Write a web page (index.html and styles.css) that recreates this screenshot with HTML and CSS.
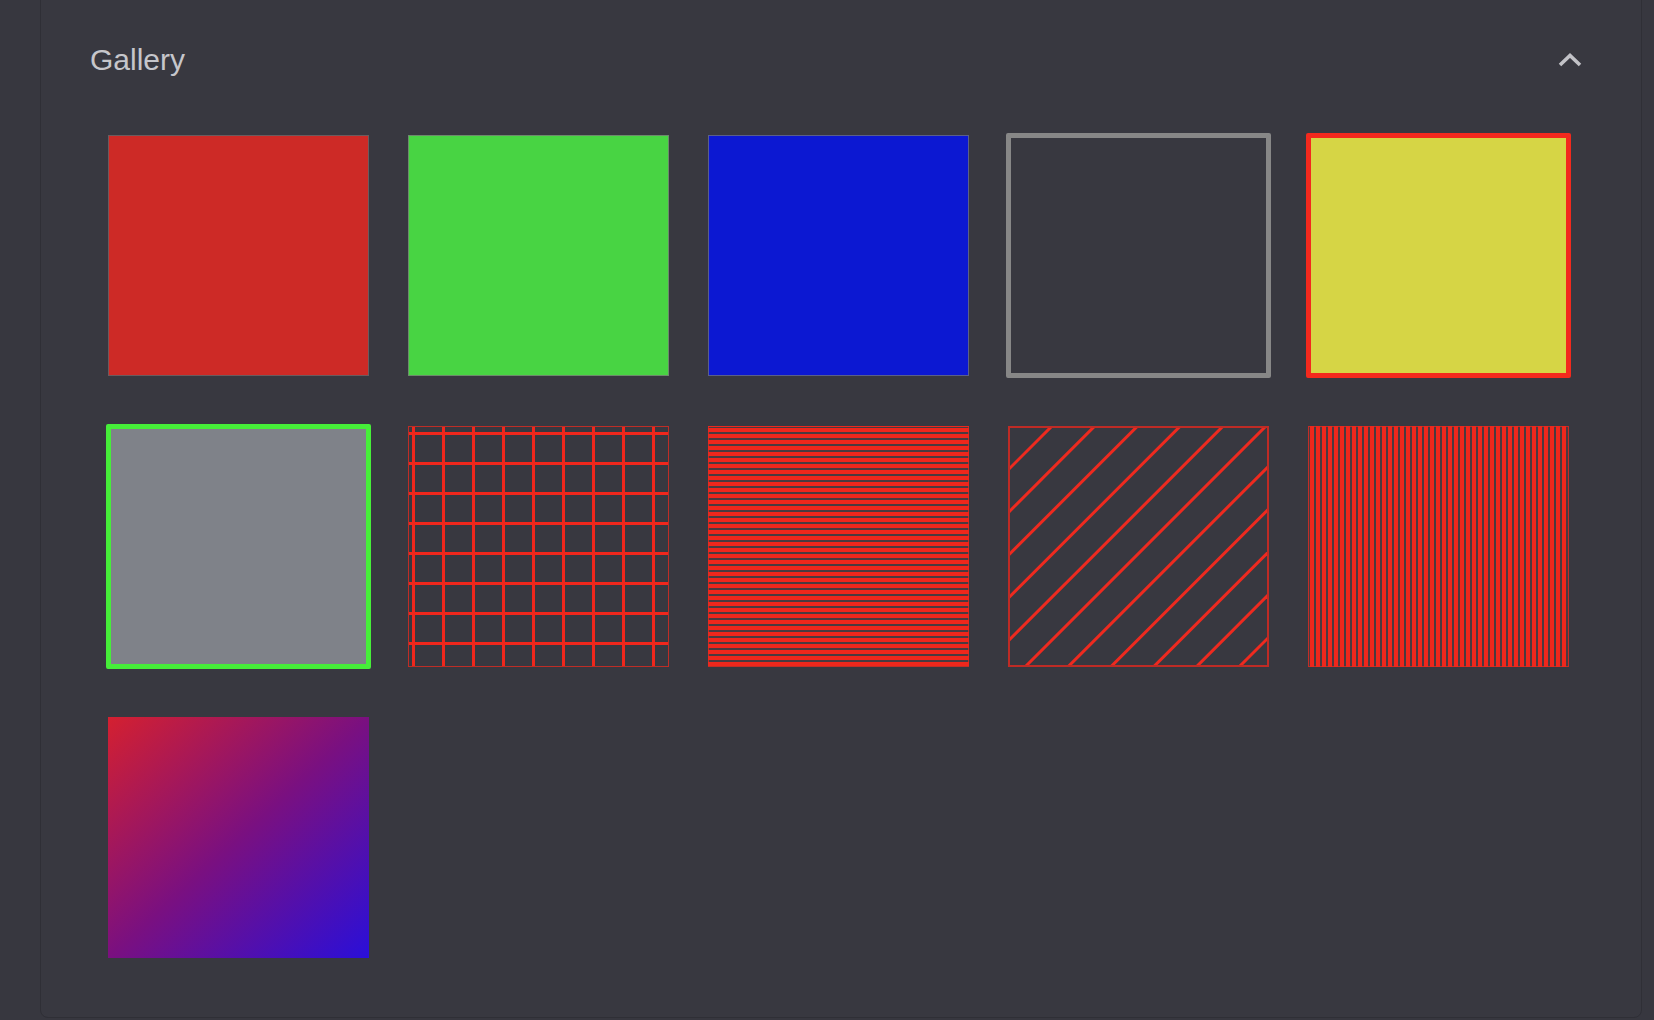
FILE: index.html
```html
<!DOCTYPE html>
<html lang="en">
<head>
<meta charset="utf-8">
<title>Gallery</title>
<link rel="stylesheet" href="styles.css">
</head>
<body>
<section class="card">
  <header class="card-header">
    <h2 class="card-title">Gallery</h2>
    <button class="collapse-btn" aria-label="Collapse">
      <svg class="chevron" width="24" height="14" viewBox="0 0 24 14" aria-hidden="true">
        <polyline points="2,12 12,2.5 22,12" fill="none" stroke="currentColor" stroke-width="3.6" stroke-linecap="butt" stroke-linejoin="miter"/>
      </svg>
    </button>
  </header>
  <div class="gallery">
    <div class="swatch swatch-red"></div>
    <div class="swatch swatch-green"></div>
    <div class="swatch swatch-blue"></div>
    <div class="swatch swatch-outline"></div>
    <div class="swatch swatch-yellow"></div>
    <div class="swatch swatch-gray"></div>
    <div class="swatch swatch-grid"></div>
    <div class="swatch swatch-hlines"></div>
    <div class="swatch swatch-diag">
      <svg class="diag-svg" viewBox="0 0 261 241" preserveAspectRatio="none" aria-hidden="true">
        <g stroke="#ee2a1f" stroke-width="3">
          <line x1="94" y1="-50" x2="-306" y2="350"/>
          <line x1="136.8" y1="-50" x2="-263.2" y2="350"/>
          <line x1="179.6" y1="-50" x2="-220.4" y2="350"/>
          <line x1="222.4" y1="-50" x2="-177.6" y2="350"/>
          <line x1="265.2" y1="-50" x2="-134.8" y2="350"/>
          <line x1="308" y1="-50" x2="-92" y2="350"/>
          <line x1="350.8" y1="-50" x2="-49.2" y2="350"/>
          <line x1="393.6" y1="-50" x2="-6.4" y2="350"/>
          <line x1="436.4" y1="-50" x2="36.4" y2="350"/>
          <line x1="479.2" y1="-50" x2="79.2" y2="350"/>
          <line x1="522" y1="-50" x2="122" y2="350"/>
        </g>
      </svg>
    </div>
    <div class="swatch swatch-vlines"></div>
    <div class="swatch swatch-gradient"></div>
  </div>
</section>
</body>
</html>
```
FILE: styles.css
```css
html, body {
  margin: 0;
  padding: 0;
}

body {
  background: #37373f;
  width: 1654px;
  height: 1020px;
  overflow: hidden;
  font-family: "Liberation Sans", Arial, sans-serif;
}

.card {
  box-sizing: border-box;
  margin: -10px 0 0 40px;
  width: 1602px;
  height: 1028px;
  background: #383840;
  border: 1px solid #2f2f36;
  border-radius: 0 0 8px 8px;
}

.card-header {
  display: flex;
  align-items: center;
  justify-content: space-between;
  padding: 51px 59px 0 49px;
  height: 36px;
}

.card-title {
  margin: 0;
  font-size: 30px;
  line-height: 36px;
  font-weight: 400;
  color: #c6c6cb;
}

.collapse-btn {
  display: flex;
  align-items: center;
  justify-content: center;
  padding: 0;
  margin: 0;
  border: 0;
  background: none;
  color: #c2c2c7;
  cursor: pointer;
}

.chevron {
  display: block;
}

.gallery {
  display: grid;
  grid-template-columns: repeat(5, 261px);
  grid-auto-rows: 241px;
  column-gap: 39px;
  row-gap: 50px;
  margin-top: 57px;
  padding-left: 67px;
}

.swatch {
  box-sizing: border-box;
  position: relative;
  overflow: hidden;
}

.swatch-red {
  background: #cd2a26;
  border: 1px solid #6b5b5e;
}

.swatch-green {
  background: #48d443;
  border: 1px solid #6d8a6c;
}

.swatch-blue {
  background: #0c18d2;
  border: 1px solid #5a5f8a;
}

.swatch-outline {
  margin: -2px;
  border: 5px solid #878787;
  border-radius: 2px;
  background: transparent;
}

.swatch-yellow {
  margin: -2px;
  border: 5px solid #f3291d;
  border-radius: 2px;
  background: #d6d545;
}

.swatch-gray {
  margin: -2px;
  border: 5px solid #46ee39;
  border-radius: 2px;
  background: #7f8289;
}

.swatch-grid {
  border: 1px solid rgba(235, 42, 30, 0.75);
  background:
    linear-gradient(90deg, #f0271c 0 3px, transparent 3px) 3px 0 / 30px 100% repeat-x,
    linear-gradient(180deg, #f0271c 0 3px, transparent 3px) 0 5px / 100% 30px repeat-y;
}

.swatch-hlines {
  border: 1px solid rgba(235, 42, 30, 0.75);
  background: repeating-linear-gradient(180deg, #4a3a40 0 1px, #ef271c 1px 5px, #4a3a40 5px 6px);
}

.swatch-vlines {
  border: 1px solid rgba(235, 42, 30, 0.75);
  background: repeating-linear-gradient(90deg, #4a3a40 0 1px, #ef271c 1px 5px, #4a3a40 5px 6px);
}

.swatch-diag {
  border: 2px solid rgba(225, 40, 30, 0.8);
}

.diag-svg {
  display: block;
  position: absolute;
  inset: -2px;
  width: 261px;
  height: 241px;
}

.swatch-gradient {
  background: linear-gradient(to bottom right, #d42030 0%, #7a1080 50%, #2a0fd9 100%);
}
```
